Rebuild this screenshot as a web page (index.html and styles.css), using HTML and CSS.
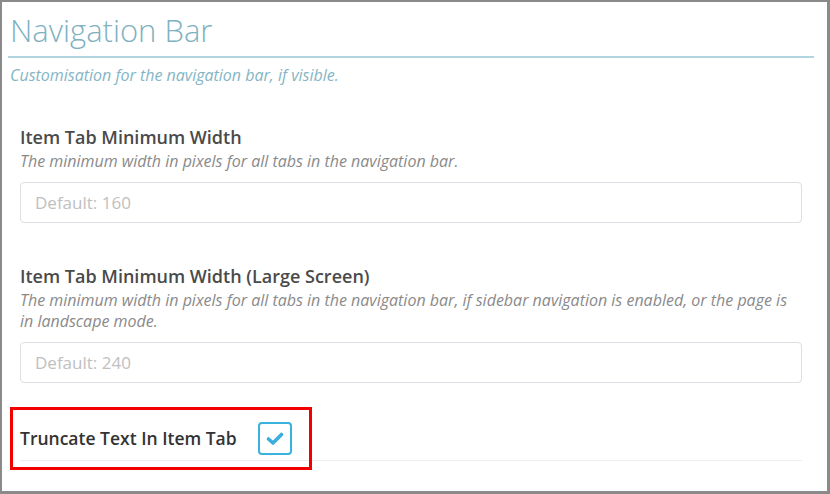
FILE: index.html
```html
<!DOCTYPE html>
<html lang="en">
  <head>
    <meta charset="UTF-8" />
    <meta name="viewport" content="width=device-width, initial-scale=1.0" />
    <title>Navigation Bar</title>
    <link rel="stylesheet" href="styles.css">
  </head>

  <body>
    <!-- 设置面板 -->
    <div class="frame">
      <!-- 标题 -->
      <div class="head">
        <h1>Navigation Bar</h1>
      </div>
      <p class="intro">Customisation for the navigation bar, if visible.</p>

      <!-- 最小宽度 -->
      <div class="field">
        <label class="label" for="minWidth">Item Tab Minimum Width</label>
        <p class="desc">The minimum width in pixels for all tabs in the navigation bar.</p>
        <input class="text" id="minWidth" type="text" placeholder="Default: 160" />
      </div>

      <!-- 大屏最小宽度 -->
      <div class="field field-large">
        <label class="label" for="minWidthLarge">Item Tab Minimum Width (Large Screen)</label>
        <p class="desc">The minimum width in pixels for all tabs in the navigation bar, if sidebar navigation is enabled, or the page is in landscape mode.</p>
        <input class="text" id="minWidthLarge" type="text" placeholder="Default: 240" />
      </div>

      <!-- 截断文字 -->
      <div class="check-row">
        <span class="label check-label">Truncate Text In Item Tab</span>
        <span class="checkbox">
          <svg width="20" height="15" viewBox="0 0 20 15">
            <polyline points="3.5,8 8,12 16.5,3.5" fill="none" stroke="#3aaedc" stroke-width="3.6" stroke-linecap="round" stroke-linejoin="round" />
          </svg>
        </span>
        <div class="mark"></div>
      </div>
    </div>
  </body>
</html>
```

FILE: styles.css
```css
/* 设置面板 */
* {
  box-sizing: border-box;
}
body {
  margin: 0;
  font-family: "Open Sans", "Liberation Sans", sans-serif;
  background-color: #fff;
}
.frame {
  width: 830px;
  height: 494px;
  border-style: solid;
  border-color: #8a8a8a;
  border-width: 2px 3px 3px 2px;
  overflow: hidden;
}

.head {
  margin: 8px 13px 0 6px;
  padding-bottom: 6px;
  border-bottom: 2px solid #b3d5df;
}
.head h1 {
  margin: 0 0 0 2px;
  font-size: 31px;
  font-weight: 300;
  line-height: 40px;
  color: #7fb1c1;
}
.intro {
  margin: 7px 0 0 8px;
  font-size: 16px;
  font-style: italic;
  line-height: 20px;
  color: #84b5c5;
}

.field {
  margin: 40px 25px 0 18px;
}
.field-large {
  margin-top: 41px;
}
.label {
  display: block;
  font-size: 18px;
  font-weight: 600;
  line-height: 24px;
  color: #4a4a4a;
}
.desc {
  margin: 2px 0 0;
  font-size: 16px;
  font-style: italic;
  line-height: 21px;
  color: #8a8a8a;
}
.text {
  display: block;
  width: 100%;
  height: 41px;
  margin-top: 10px;
  padding: 0 14px;
  font-family: inherit;
  font-size: 17px;
  color: #555;
  border: 1px solid #dcdfe3;
  border-radius: 4px;
  outline: none;
}
.text::placeholder {
  color: #c0c0c0;
}

.check-row {
  position: relative;
  display: flex;
  align-items: center;
  height: 45px;
  margin: 33px 25px 0 18px;
  border-bottom: 1px solid #eeeeee;
}
.check-label {
  width: 238px;
  font-size: 17.5px;
  color: #333;
}
.checkbox {
  display: flex;
  align-items: center;
  justify-content: center;
  width: 34px;
  height: 33px;
  border: 2px solid #3ab2de;
  border-radius: 4px;
}

/* 红色标注框 */
.mark {
  position: absolute;
  left: -10px;
  top: -9px;
  width: 302px;
  height: 63px;
  border: 3px solid #f20000;
}
```
